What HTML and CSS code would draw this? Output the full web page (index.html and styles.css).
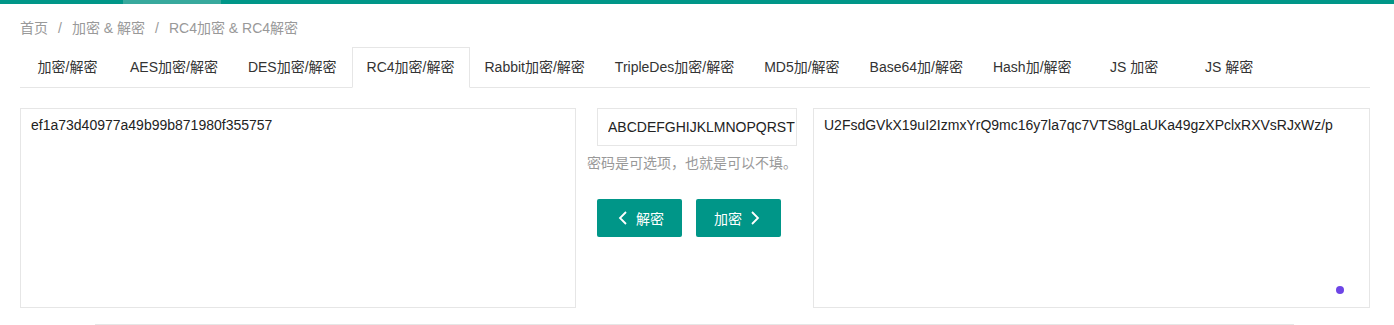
FILE: index.html
```html
<!DOCTYPE html>
<html lang="zh-CN">
<head>
    <meta charset="UTF-8">
    <meta name="viewport" content="width=device-width, initial-scale=1.0">
    <title>RC4加密 &amp; RC4解密</title>
    <link rel="stylesheet" href="styles.css">
</head>
<body>
    <div class="topbar"><span class="topbar-mark"></span></div>

    <div class="page">
        <div class="crumbs">
            <a href="#">首页</a><span class="sep">/</span><a href="#">加密 &amp; 解密</a><span class="sep">/</span><cite>RC4加密 &amp; RC4解密</cite>
        </div>

        <ul class="tabs">
            <li>加密/解密</li>
            <li>AES加密/解密</li>
            <li>DES加密/解密</li>
            <li class="active">RC4加密/解密</li>
            <li>Rabbit加密/解密</li>
            <li>TripleDes加密/解密</li>
            <li>MD5加/解密</li>
            <li>Base64加/解密</li>
            <li>Hash加/解密</li>
            <li>JS 加密</li>
            <li>JS 解密</li>
        </ul>

        <div class="workspace">
            <div class="pane">
                <textarea class="text-box">ef1a73d40977a49b99b871980f355757</textarea>
            </div>

            <div class="middle">
                <input type="text" class="key-input" value="ABCDEFGHIJKLMNOPQRSTUVWXYZ">
                <div class="hint">密码是可选项，也就是可以不填。</div>
                <div class="actions">
                    <button class="btn">
                        <svg width="16" height="16" viewBox="0 0 16 16"><polyline points="11,2 5,8 11,14" fill="none" stroke="#fff" stroke-width="1.8"/></svg>
                        解密
                    </button>
                    <button class="btn">
                        加密
                        <svg width="16" height="16" viewBox="0 0 16 16"><polyline points="5,2 11,8 5,14" fill="none" stroke="#fff" stroke-width="1.8"/></svg>
                    </button>
                </div>
            </div>

            <div class="pane">
                <textarea class="text-box">U2FsdGVkX19uI2IzmxYrQ9mc16y7la7qc7VTS8gLaUKa49gzXPclxRXVsRJxWz/p</textarea>
                <span class="dot"></span>
            </div>
        </div>

        <div class="footer-box"></div>
    </div>
</body>
</html>
```

FILE: styles.css
```css
html {
    overflow: hidden;
}
body {
    margin: 0;
    font-family: "Liberation Sans", "Noto Sans CJK SC", sans-serif;
    font-size: 14px;
    color: #333;
    background: #fff;
}
.topbar {
    height: 4px;
    background-color: #009688;
}
.topbar-mark {
    display: block;
    margin-left: 123px;
    width: 98px;
    height: 4px;
    background-color: #38a99d;
}
.page {
    padding: 0 24px 0 20px;
}
.crumbs {
    margin-top: 14px;
    line-height: 20px;
    color: #999;
}
.crumbs a,
.crumbs cite {
    color: #999;
    text-decoration: none;
    font-style: normal;
}
.crumbs .sep {
    margin: 0 10px;
    color: #999;
}
.tabs {
    display: flex;
    align-items: flex-start;
    margin: 9px 0 0;
    padding: 0;
    list-style: none;
    height: 40px;
    border-bottom: 1px solid #e6e6e6;
}
.tabs li {
    padding: 0 15px;
    min-width: 65px;
    height: 40px;
    line-height: 40px;
    text-align: center;
    white-space: nowrap;
    color: #333;
}
.tabs li.active {
    padding: 0 14px;
    height: 39px;
    line-height: 39px;
    background-color: #fff;
    border: 1px solid #e6e6e6;
    border-bottom-color: #fff;
}
.workspace {
    display: grid;
    grid-template-columns: 556px 1fr 557px;
    margin-top: 20px;
}
.pane {
    position: relative;
}
.text-box {
    display: block;
    width: 100%;
    height: 200px;
    box-sizing: border-box;
    padding: 6px 10px;
    border: 1px solid #e6e6e6;
    resize: none;
    font-family: inherit;
    font-size: 14px;
    line-height: 20px;
    color: #222;
    outline: none;
}
.dot {
    position: absolute;
    right: 26px;
    bottom: 14px;
    width: 8px;
    height: 8px;
    border-radius: 50%;
    background-color: #6d45e6;
}
.key-input {
    display: block;
    margin: 0 16px 0 21px;
    width: 200px;
    height: 38px;
    box-sizing: border-box;
    padding: 0 1px 0 10px;
    border: 1px solid #e6e6e6;
    font-family: inherit;
    font-size: 14px;
    color: #222;
    outline: none;
}
.hint {
    margin: 7px 0 0 11px;
    line-height: 20px;
    color: #999;
    white-space: nowrap;
}
.actions {
    display: flex;
    gap: 14px;
    margin: 26px 0 0 21px;
}
.btn {
    display: inline-flex;
    align-items: center;
    gap: 5px;
    height: 38px;
    padding: 0 18px;
    border: none;
    border-radius: 2px;
    background-color: #009688;
    color: #fff;
    font-family: inherit;
    font-size: 14px;
    cursor: pointer;
}
.footer-box {
    margin: 16px 76px 0 75px;
    height: 40px;
    border: 1px solid #e6e6e6;
    background-color: #fbfbfb;
}
```
